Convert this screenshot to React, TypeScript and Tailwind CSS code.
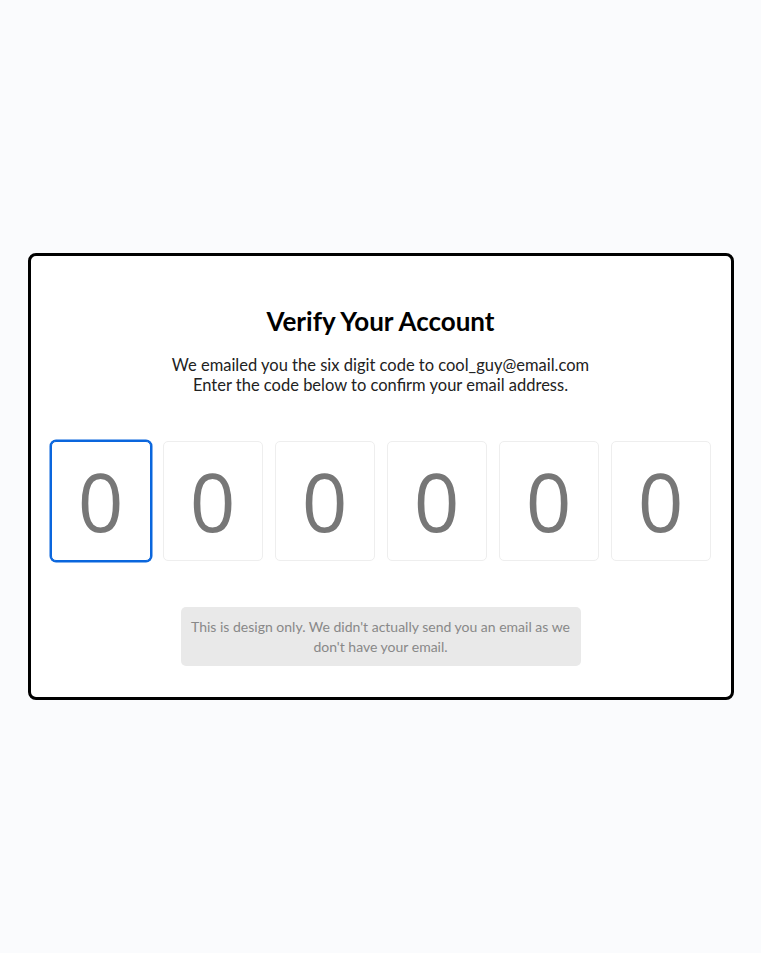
export default function App() {
  const digits = ['0', '0', '0', '0', '0', '0']
  return (
    <div className="flex min-h-screen items-center justify-center bg-[#fafbfd] font-['Lato','Liberation_Sans',sans-serif]">
      <div className="w-[706px] rounded-[8px] border-[3px] border-black bg-white px-[20px] pt-[49px] pb-[31px] text-center">
        <h2 className="text-[26px] font-bold leading-[32px] text-black">Verify Your Account</h2>
        <p className="mt-[18px] text-[16.5px] leading-[20px] text-[#222]">
          We emailed you the six digit code to cool_guy@email.com
          <br />
          Enter the code below to confirm your email address.
        </p>
        <div className="mt-[46px] flex justify-between">
          {digits.map((d, i) => (
            <input
              key={i}
              type="text"
              maxLength={1}
              placeholder={d}
              className={
                'h-[120px] w-[100px] rounded-[5px] border bg-white text-center font-["Open_Sans",sans-serif] text-[80px] outline-none placeholder:text-[#777] ' +
                (i === 0 ? 'border-[#0a66dd] ring-[1.5px] ring-[#0a66dd]' : 'border-[#eee]')
              }
            />
          ))}
        </div>
        <div className="mx-auto mt-[46px] w-[400px] rounded-[5px] bg-[#e9e9e9] px-[10px] py-[10px] text-[14px] leading-[19.5px] text-[#888]">
          This is design only. We didn't actually send you an email as we don't have your email.
        </div>
      </div>
    </div>
  )
}
